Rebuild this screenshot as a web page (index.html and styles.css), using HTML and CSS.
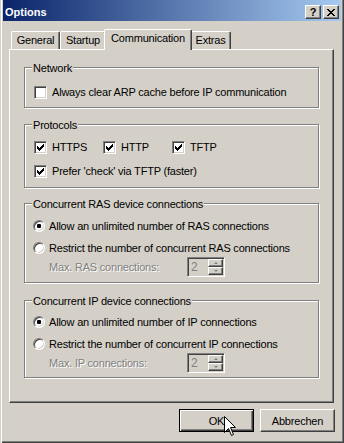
FILE: index.html
```html
<!DOCTYPE html>
<html>
<head>
<meta charset="utf-8">
<title>Options</title>
<link rel="stylesheet" href="styles.css">
</head>
<body>
<div class="window">
  <div class="titlebar">
    <span class="title">Options</span>
    <div class="tbtns">
      <span class="tbtn help">?</span>
      <span class="tbtn">
        <svg width="8" height="7" viewBox="0 0 8 7" shape-rendering="crispEdges"><g fill="#000">
          <rect x="0" y="0" width="2" height="1"/><rect x="6" y="0" width="2" height="1"/>
          <rect x="1" y="1" width="2" height="1"/><rect x="5" y="1" width="2" height="1"/>
          <rect x="2" y="2" width="4" height="1"/>
          <rect x="3" y="3" width="2" height="1"/>
          <rect x="2" y="4" width="4" height="1"/>
          <rect x="1" y="5" width="2" height="1"/><rect x="5" y="5" width="2" height="1"/>
          <rect x="0" y="6" width="2" height="1"/><rect x="6" y="6" width="2" height="1"/>
        </g></svg>
      </span>
    </div>
  </div>

  <div class="tabs">
    <div class="tab t-general">General</div>
    <div class="tab t-startup">Startup</div>
    <div class="tab sel t-comm">Communication</div>
    <div class="tab t-extras">Extras</div>
  </div>

  <div class="panel">
    <div class="group g-net">
      <div class="legend">Network</div>
      <div class="row">
        <span class="cb"></span><span>Always clear ARP cache before IP communication</span>
      </div>
    </div>

    <div class="group g-proto">
      <div class="legend">Protocols</div>
      <div class="row">
        <div class="item"><span class="cb on"><svg width="11" height="11" viewBox="0 0 11 11" shape-rendering="crispEdges"><g fill="#000"><rect x="2" y="4" width="1" height="3"/><rect x="3" y="5" width="1" height="3"/><rect x="4" y="6" width="1" height="3"/><rect x="5" y="5" width="1" height="3"/><rect x="6" y="4" width="1" height="3"/><rect x="7" y="3" width="1" height="3"/><rect x="8" y="2" width="1" height="3"/></g></svg></span><span>HTTPS</span></div>
        <div class="item"><span class="cb on"><svg width="11" height="11" viewBox="0 0 11 11" shape-rendering="crispEdges"><g fill="#000"><rect x="2" y="4" width="1" height="3"/><rect x="3" y="5" width="1" height="3"/><rect x="4" y="6" width="1" height="3"/><rect x="5" y="5" width="1" height="3"/><rect x="6" y="4" width="1" height="3"/><rect x="7" y="3" width="1" height="3"/><rect x="8" y="2" width="1" height="3"/></g></svg></span><span>HTTP</span></div>
        <div class="item"><span class="cb on"><svg width="11" height="11" viewBox="0 0 11 11" shape-rendering="crispEdges"><g fill="#000"><rect x="2" y="4" width="1" height="3"/><rect x="3" y="5" width="1" height="3"/><rect x="4" y="6" width="1" height="3"/><rect x="5" y="5" width="1" height="3"/><rect x="6" y="4" width="1" height="3"/><rect x="7" y="3" width="1" height="3"/><rect x="8" y="2" width="1" height="3"/></g></svg></span><span>TFTP</span></div>
      </div>
      <div class="row second">
        <span class="cb on"><svg width="11" height="11" viewBox="0 0 11 11" shape-rendering="crispEdges"><g fill="#000"><rect x="2" y="4" width="1" height="3"/><rect x="3" y="5" width="1" height="3"/><rect x="4" y="6" width="1" height="3"/><rect x="5" y="5" width="1" height="3"/><rect x="6" y="4" width="1" height="3"/><rect x="7" y="3" width="1" height="3"/><rect x="8" y="2" width="1" height="3"/></g></svg></span><span>Prefer 'check' via TFTP (faster)</span>
      </div>
    </div>

    <div class="group g-ras">
      <div class="legend">Concurrent RAS device connections</div>
      <div class="rrow first"><span class="rb on"></span><span>Allow an unlimited number of RAS connections</span></div>
      <div class="rrow"><span class="rb"></span><span>Restrict the number of concurrent RAS connections</span></div>
      <div class="maxrow">
        <span class="dis maxlabel">Max. RAS connections:</span>
        <div class="spin"><span class="val">2</span><div class="arrows"><span class="sbtn"><i class="up"></i></span><span class="sbtn"><i class="down"></i></span></div></div>
      </div>
    </div>

    <div class="group g-ip">
      <div class="legend">Concurrent IP device connections</div>
      <div class="rrow first"><span class="rb on"></span><span>Allow an unlimited number of IP connections</span></div>
      <div class="rrow"><span class="rb"></span><span>Restrict the number of concurrent IP connections</span></div>
      <div class="maxrow">
        <span class="dis maxlabel">Max. IP connections:</span>
        <div class="spin"><span class="val">2</span><div class="arrows"><span class="sbtn"><i class="up"></i></span><span class="sbtn"><i class="down"></i></span></div></div>
      </div>
    </div>
  </div>

  <div class="buttons">
    <button class="btn def">OK</button>
    <button class="btn">Abbrechen</button>
  </div>

  <svg class="cursor" width="13" height="22" viewBox="0 0 13 22"><polygon points="0.5,0.5 0.5,16.5 4.5,12.5 7.5,19.5 9.5,18.5 6.5,11.5 11.5,11.5" fill="#fff" stroke="#000" stroke-width="1" stroke-linejoin="miter"/></svg>
</div>
</body>
</html>
```

FILE: styles.css
```css
* { box-sizing: border-box; }

body {
  margin: 0;
  font: 11px "Liberation Sans", Arial, sans-serif;
  letter-spacing: -0.2px;
  color: #000;
  background: #d4d0c8;
}

.window {
  position: relative;
  width: 344px;
  height: 443px;
  padding: 0 3px 3px;
  background: #d4d0c8;
  display: flex;
  flex-direction: column;
  box-shadow: inset 1px 0 #d4d0c8, inset 2px 0 #fff, inset -1px -1px #404040, inset -2px -2px #808080;
}

/* title bar */
.titlebar {
  height: 21px;
  padding: 3px 2px 0 2px;
  display: flex;
  align-items: center;
  justify-content: space-between;
  background: linear-gradient(to right, #0a246a, #a6caf0);
}
.title {
  color: #fff;
  font-weight: bold;
  line-height: 13px;
  letter-spacing: 0;
}
.tbtns { display: flex; gap: 2px; }
.tbtn {
  width: 16px;
  height: 14px;
  background: #d4d0c8;
  border: 1px solid;
  border-color: #fff #404040 #404040 #fff;
  box-shadow: inset -1px -1px #808080;
  display: flex;
  align-items: center;
  justify-content: center;
}
.tbtn.help {
  font-weight: bold;
  font-size: 11px;
  line-height: 12px;
  letter-spacing: 0;
}

/* tabs */
.tabs {
  display: flex;
  align-items: flex-end;
  height: 20px;
  margin-top: 8px;
  padding-left: 8px;
}
.tab {
  height: 18px;
  line-height: 13px;
  padding-top: 2px;
  text-align: center;
  background: #d4d0c8;
  border: 1px solid;
  border-bottom: 0;
  border-color: #fff #404040 #fff #fff;
  border-radius: 2px 2px 0 0;
  box-shadow: inset -1px 0 #808080;
}
.t-general { width: 49px; }
.t-startup { width: 46px; }
.t-comm { width: 88px; }
.t-extras { width: 41px; }
.tab.sel {
  position: relative;
  z-index: 1;
  height: 21px;
  margin: 0 -2px -1px;
  padding-top: 2px;
}

/* panel */
.panel {
  height: 354px;
  margin: 0 7px 0 6px;
  padding: 17px 14px 0;
  border: 1px solid;
  border-color: #fff #404040 #404040 #fff;
  box-shadow: inset -1px -1px #808080;
}

.group {
  border: 1px solid #808080;
  box-shadow: inset 1px 1px #fff, 1px 1px #fff;
  padding: 0 8px 0 9px;
}
.legend {
  width: fit-content;
  margin: -6px 0 0 -2px;
  padding: 0 1px;
  line-height: 13px;
  background: #d4d0c8;
}

.row {
  display: flex;
  align-items: center;
  height: 13px;
  line-height: 13px;
}
.item {
  display: flex;
  align-items: center;
  width: 69px;
}
.cb {
  flex: none;
  width: 13px;
  height: 13px;
  margin-right: 5px;
  background: #fff;
  border: 1px solid;
  border-color: #808080 #fff #fff #808080;
  box-shadow: inset 1px 1px #404040, inset -1px -1px #d4d0c8;
}
.cb svg { display: block; }

.g-net { padding-bottom: 8px; }
.g-net .row { margin-top: 11px; }

.g-proto { margin-top: 16px; padding-bottom: 9px; }
.g-proto .row { margin-top: 9px; }
.g-proto .row.second { margin-top: 11px; }

.rrow {
  display: flex;
  align-items: center;
  height: 12px;
  line-height: 12px;
  margin-top: 10px;
  margin-left: -1px;
}
.rb {
  flex: none;
  width: 12px;
  height: 12px;
  margin-right: 4px;
  border-radius: 50%;
  background: #fff;
  border: 1px solid;
  border-color: #808080 #fff #fff #808080;
  box-shadow: inset 1px 1px #404040, inset -1px -1px #d4d0c8;
}
.rb.on::after {
  content: "";
  display: block;
  width: 4px;
  height: 4px;
  margin: 3px;
  border-radius: 1px;
  background: #000;
}

.g-ras { margin-top: 15px; padding-bottom: 5px; }
.g-ras .rrow.first { margin-top: 9px; }
.g-ip { margin-top: 17px; padding-bottom: 4px; }
.g-ip .rrow.first { margin-top: 8px; }

.maxrow {
  display: flex;
  align-items: center;
  margin-top: 3px;
  padding-left: 15px;
  line-height: 13px;
}
.maxlabel { width: 138px; }
.dis {
  color: #808080;
  text-shadow: 1px 1px #fff;
}

.spin {
  width: 38px;
  height: 20px;
  display: flex;
  justify-content: space-between;
  padding: 1px;
  border: 1px solid;
  border-color: #808080 #fff #fff #808080;
  box-shadow: inset 1px 1px #404040, inset -1px -1px #d4d0c8;
}
.val {
  color: #808080;
  padding-left: 2px;
  line-height: 16px;
  font-size: 12px;
}
.arrows { display: flex; flex-direction: column; }
.sbtn {
  width: 15px;
  height: 8px;
  display: flex;
  align-items: center;
  justify-content: center;
  background: #d4d0c8;
  border: 1px solid;
  border-color: #fff #404040 #404040 #fff;
  box-shadow: inset -1px -1px #808080;
}
.sbtn i {
  width: 0;
  height: 0;
  border-left: 2px solid transparent;
  border-right: 2px solid transparent;
}
.sbtn i.up { border-bottom: 2px solid #808080; }
.sbtn i.down { border-top: 2px solid #808080; }

/* buttons */
.buttons {
  display: flex;
  justify-content: flex-end;
  gap: 6px;
  margin-top: 6px;
  padding-right: 6px;
}
.btn {
  width: 75px;
  height: 23px;
  padding: 0;
  font: inherit;
  letter-spacing: inherit;
  color: #000;
  background: #d4d0c8;
  border: 1px solid;
  border-color: #fff #404040 #404040 #fff;
  box-shadow: inset -1px -1px #808080;
}
.btn.def {
  border-color: #000;
  box-shadow: inset 1px 1px #fff, inset -1px -1px #404040, inset -2px -2px #808080;
}

.cursor {
  position: absolute;
  left: 224px;
  top: 416px;
}
```
